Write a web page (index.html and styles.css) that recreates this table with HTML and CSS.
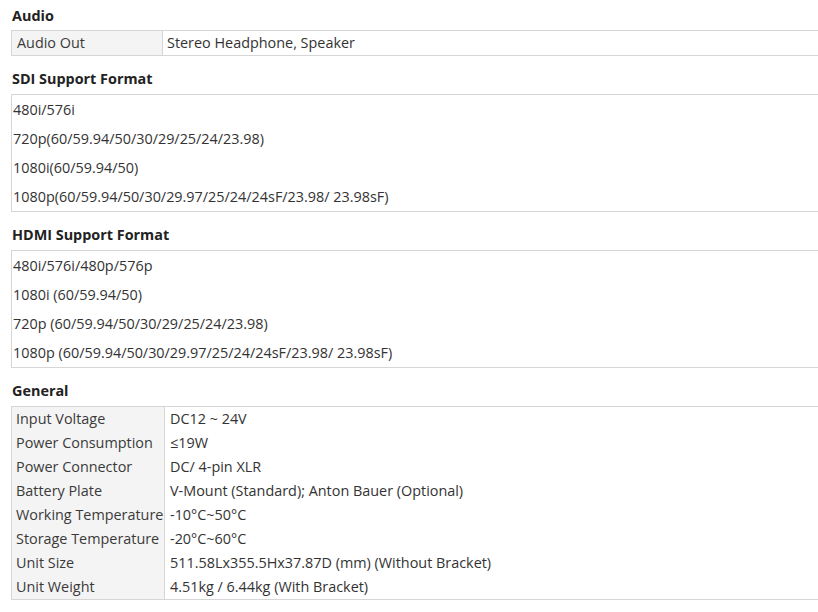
FILE: index.html
```html
<!DOCTYPE html>
<html>
<head>
<meta charset="utf-8">
<link rel="stylesheet" href="styles.css">
</head>
<body>
<div class="page">
  <h3 class="heading first">Audio</h3>
  <table class="spec spec-audio">
    <tr><td class="label">Audio Out</td><td class="value">Stereo Headphone, Speaker</td></tr>
  </table>

  <h3 class="heading">SDI Support Format</h3>
  <div class="formats">
    <p>480i/576i</p>
    <p>720p(60/59.94/50/30/29/25/24/23.98)</p>
    <p>1080i(60/59.94/50)</p>
    <p>1080p(60/59.94/50/30/29.97/25/24/24sF/23.98/ 23.98sF)</p>
  </div>

  <h3 class="heading">HDMI Support Format</h3>
  <div class="formats">
    <p>480i/576i/480p/576p</p>
    <p>1080i (60/59.94/50)</p>
    <p>720p (60/59.94/50/30/29/25/24/23.98)</p>
    <p>1080p (60/59.94/50/30/29.97/25/24/24sF/23.98/ 23.98sF)</p>
  </div>

  <h3 class="heading">General</h3>
  <table class="spec spec-general">
    <tr><td class="label">Input Voltage</td><td class="value">DC12 ~ 24V</td></tr>
    <tr><td class="label">Power Consumption</td><td class="value">≤19W</td></tr>
    <tr><td class="label">Power Connector</td><td class="value">DC/ 4-pin XLR</td></tr>
    <tr><td class="label">Battery Plate</td><td class="value">V-Mount (Standard); Anton Bauer (Optional)</td></tr>
    <tr><td class="label">Working Temperature</td><td class="value">-10°C~50°C</td></tr>
    <tr><td class="label">Storage Temperature</td><td class="value">-20°C~60°C</td></tr>
    <tr><td class="label">Unit Size</td><td class="value">511.58Lx355.5Hx37.87D (mm) (Without Bracket)</td></tr>
    <tr><td class="label">Unit Weight</td><td class="value">4.51kg / 6.44kg (With Bracket)</td></tr>
  </table>
</div>
</body>
</html>
```

FILE: styles.css
```css
html, body {
  margin: 0;
  padding: 0;
  background: #ffffff;
  overflow: hidden;
}

.page {
  padding-left: 11px;
  width: 830px;
  font-family: "Open Sans", "Noto Sans", sans-serif;
  font-size: 14.4px;
  color: #333333;
}

.heading {
  margin: 0;
  padding: 13px 0 5px 1px;
  line-height: 20px;
  height: 20px;
  font-size: 14.4px;
  font-weight: 700;
  color: #222222;
}

.heading.first {
  padding-top: 6px;
  padding-bottom: 4px;
}

.spec {
  width: 820px;
  border-collapse: collapse;
  border: 1px solid #d6d6d6;
}

.spec td {
  padding: 0 0 0 5px;
  height: 24px;
  line-height: 24px;
  white-space: nowrap;
  vertical-align: middle;
}

.spec .label {
  background: #f4f4f4;
  border-right: 1px solid #d6d6d6;
  color: #3a3a3a;
}

.spec-audio .label {
  width: 145px;
}

.spec-audio .value {
  padding-left: 4px;
}

.spec-general .label {
  width: 148px;
  padding-left: 4px;
}

.spec-general .value {
  padding-left: 5px;
}

.formats {
  width: 820px;
  border: 1px solid #d6d6d6;
}

.formats p {
  margin: 0;
  padding-left: 1px;
  height: 29px;
  line-height: 29px;
  white-space: nowrap;
}
```
